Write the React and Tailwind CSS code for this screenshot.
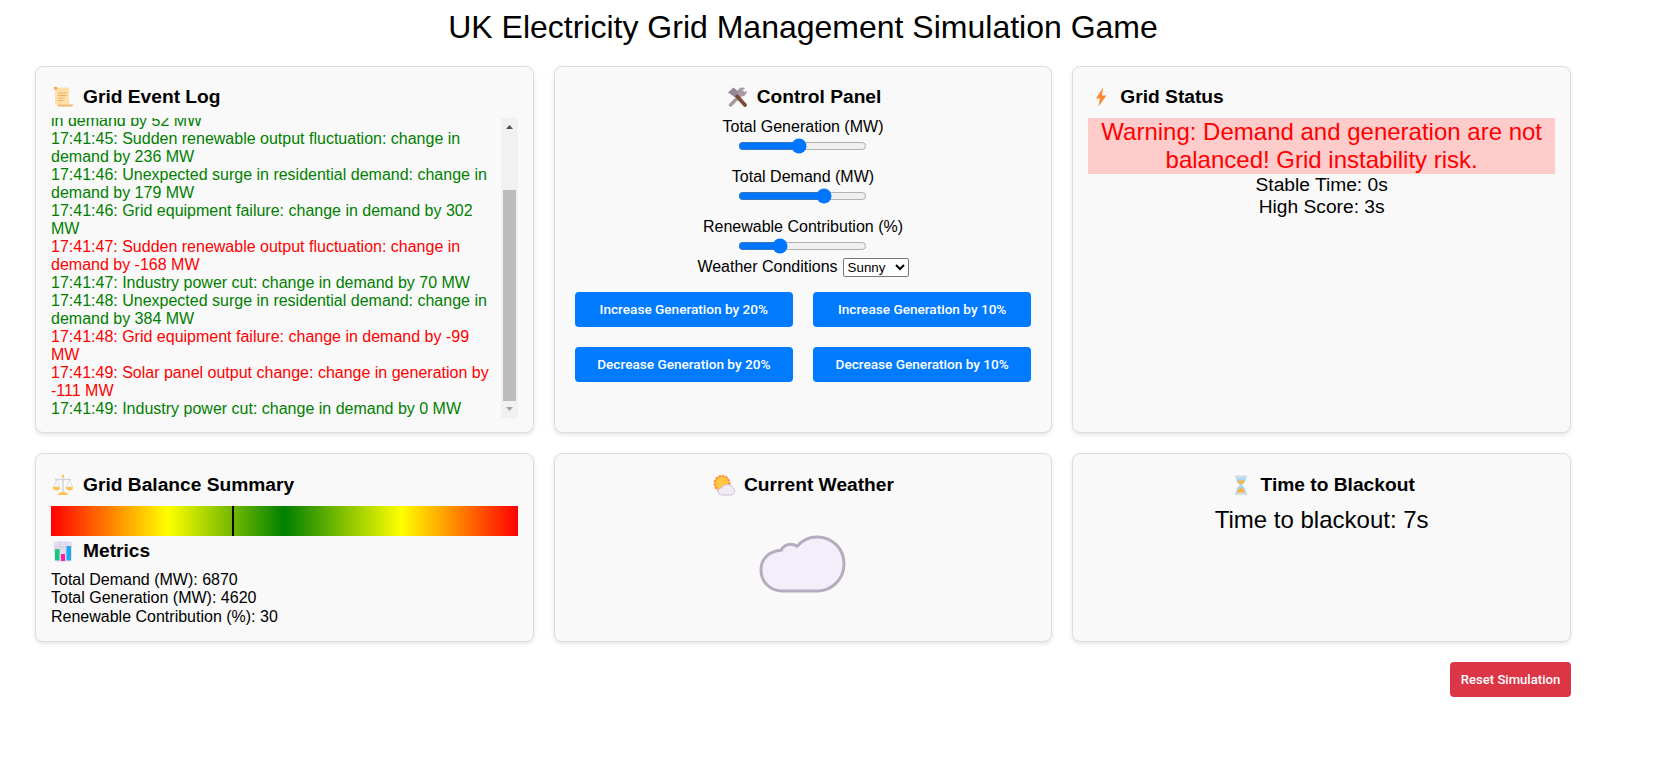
const LOG = [
  { text: '17:41:44: Sudden wind generation output fluctuation: change\nin demand by 52 MW', up: true },
  { text: '17:41:45: Sudden renewable output fluctuation: change in demand by 236 MW', up: true },
  { text: '17:41:46: Unexpected surge in residential demand: change in demand by 179 MW', up: true },
  { text: '17:41:46: Grid equipment failure: change in demand by 302 MW', up: true },
  { text: '17:41:47: Sudden renewable output fluctuation: change in demand by -168 MW', up: false },
  { text: '17:41:47: Industry power cut: change in demand by 70 MW', up: true },
  { text: '17:41:48: Unexpected surge in residential demand: change in demand by 384 MW', up: true },
  { text: '17:41:48: Grid equipment failure: change in demand by -99 MW', up: false },
  { text: '17:41:49: Solar panel output change: change in generation by -111 MW', up: false },
  { text: '17:41:49: Industry power cut: change in demand by 0 MW', up: true },
];

const SLIDERS = [
  { label: 'Total Generation (MW)', value: 4620, max: 10000 },
  { label: 'Total Demand (MW)', value: 6870, max: 10000 },
  { label: 'Renewable Contribution (%)', value: 30, max: 100 },
];

const ACTIONS = [
  'Increase Generation by 20%',
  'Increase Generation by 10%',
  'Decrease Generation by 20%',
  'Decrease Generation by 10%',
];

function Icon({ children }) {
  return (
    <svg viewBox="0 0 24 24" className="w-6 h-6 mr-2 shrink-0">
      {children}
    </svg>
  );
}

const ScrollIcon = () => (
  <Icon>
    <path d="M4 2.500h14v17H4z" fill="#ffdfa8" />
    <path d="M3 2h3v2.500H3z" fill="#f5a550" />
    <path d="M6 19.500h16.500l-1.500 2H7z" fill="#f7b469" />
    <path d="M7 8h9M7 10.500h9M7 13h7M7 15.500h5" stroke="#f2b26b" strokeWidth="1.200" />
  </Icon>
);

const ToolsIcon = () => (
  <Icon>
    <path d="M5.500 20L18 7.500" stroke="#a59aa5" strokeWidth="3.500" strokeLinecap="round" />
    <path d="M17 2.500a5 5 0 0 1 3 .8l-3 2.700 1.800 2 3-2.600a5 5 0 0 1-6.800 5.500l-2.500-2.500A5 5 0 0 1 17 2.500z" fill="#a59aa5" />
    <path d="M9.500 8.500L20 20" stroke="#7c4a3b" strokeWidth="3.800" strokeLinecap="round" />
    <path d="M3 7.500L8.500 2.500l5.500 4.500-4.500 5z" fill="#938996" />
  </Icon>
);

const BoltIcon = () => (
  <Icon>
    <path d="M15 2.500L8 13.500h4L10.500 21.500 18.500 10.500H14z" fill="#ff8a33" />
  </Icon>
);

const BalanceIcon = () => (
  <Icon>
    <path d="M12 3v16" stroke="#d8d2dc" strokeWidth="1.600" />
    <path d="M4 6.500h16" stroke="#d8d2dc" strokeWidth="1.400" />
    <path d="M5.500 7L2.500 14h6zM18.500 7l-3 7h6z" fill="none" stroke="#dcd6de" strokeWidth="0.800" />
    <path d="M2 14h7a3.500 3.500 0 0 1-7 0zM15 14h7a3.500 3.500 0 0 1-7 0z" fill="#ffc44d" />
    <path d="M7 22c0-2 2-3 5-3s5 1 5 3z" fill="#ffc44d" />
    <circle cx="12" cy="3" r="1.300" fill="#ffc44d" />
  </Icon>
);

const ChartIcon = () => (
  <Icon>
    <rect x="3" y="2.500" width="18" height="20" rx="2" fill="#e4dcef" />
    <path d="M3 8h18M9 2.500v20M15 2.500v20" stroke="#cfc5dd" strokeWidth="0.800" />
    <rect x="4" y="10" width="4.500" height="11.500" rx="1" fill="#12c97c" />
    <rect x="10" y="15" width="4" height="7" fill="#ff1f9c" />
    <rect x="15.500" y="7" width="4.500" height="14.500" rx="1" fill="#1ca9ee" />
  </Icon>
);

const SunCloudIcon = () => (
  <Icon>
    <circle cx="10" cy="10.500" r="7.500" fill="#ffc740" stroke="#ff8a33" strokeWidth="2" strokeDasharray="2.500 1" />
    <path d="M10 22c-2.500 0-4-1.500-4-3.500s1.500-3.500 3.500-3.700c1-2 3-3.300 5.500-3.300 3 0 5 1.500 6 3.500 1 .7 1.500 2 1.500 3.200 0 2.300-1.500 3.800-4 3.800z" fill="#f0ebf7" stroke="#c9c0d3" strokeWidth="1" />
  </Icon>
);

const HourglassIcon = () => (
  <Icon>
    <path d="M6 2.500h12v2.500H6zM6 19.500h12V22H6z" fill="#d5dce4" />
    <path d="M7 5h10c0 4-2.500 5.500-4 7 1.500 1.500 4 3 4 7.500H7c0-4.500 2.500-6 4-7.500C9.500 10.500 7 9 7 5z" fill="#a8daf7" />
    <path d="M8.500 7.500h7c-.5 2-2.500 3.500-3.500 4.500-1-1-3-2.500-3.500-4.500zM12 14c1.500 1.500 3.500 3 4 5.500H8c.5-2.500 2.500-4 4-5.500z" fill="#ffb23e" />
  </Icon>
);

function Heading({ icon, children, center }) {
  return (
    <h3 className={`flex items-center h-[30px] text-[19.2px] font-bold text-black ${center ? 'justify-center' : ''}`}>
      {icon}
      {children}
    </h3>
  );
}

function Card({ children, className = '' }) {
  return (
    <section className={`rounded-lg border border-[#dddddd] bg-[#f9f9f9] p-[15px] shadow-[0_2px_4px_rgba(0,0,0,0.1)] ${className}`}>
      {children}
    </section>
  );
}

export default function App() {
  return (
    <div className="w-[1571px] pl-[35px] font-['Liberation_Sans',Arial,sans-serif] text-base text-black">
      <h1 className="h-[66px] pt-[9px] text-center text-[32px] leading-[37px]">
        UK Electricity Grid Management Simulation Game
      </h1>

      <div className="grid grid-cols-3 grid-rows-[367px_189px] gap-5">
        <Card>
          <Heading icon={<ScrollIcon />}>Grid Event Log</Heading>
          <div className="mt-[6px] flex h-[300px]">
            <div className="flex flex-1 flex-col justify-end overflow-hidden text-[16px] leading-[18px]">
              {LOG.map((item, i) => (
                <div key={i} className={`shrink-0 whitespace-pre-line ${item.up ? 'text-[#008000]' : 'text-[#ff0000]'}`}>
                  {item.text}
                </div>
              ))}
            </div>
            <div className="flex w-[17px] shrink-0 flex-col items-center bg-[#f1f1f1]">
              <svg viewBox="0 0 17 17" className="w-[17px] h-[17px] shrink-0">
                <path d="M5 11h7L8.500 7z" fill="#505050" />
              </svg>
              <div className="mt-[55px] w-[13px] flex-1 bg-[#bcbcbc]" />
              <svg viewBox="0 0 17 17" className="w-[17px] h-[17px] shrink-0">
                <path d="M5 6h7l-3.500 4z" fill="#a3a3a3" />
              </svg>
            </div>
          </div>
        </Card>

        <Card className="text-center">
          <Heading icon={<ToolsIcon />} center>Control Panel</Heading>
          <div className="mt-[6px]">
            {SLIDERS.map((s, i) => (
              <div key={s.label} className={i === 2 ? 'h-[38px]' : 'h-[50px]'}>
                <label className="block leading-[18px]">{s.label}</label>
                <input
                  type="range"
                  min="0"
                  max={s.max}
                  defaultValue={s.value}
                  className="mt-[2px] mx-auto block w-[129px]"
                />
              </div>
            ))}
            <div className="flex h-[22px] items-center justify-center">
              <label>Weather Conditions</label>
              <select defaultValue="Sunny" className="ml-[5px] h-[19px] w-[66px] border border-[#767676] rounded-[2px] bg-white text-[13.330px]">
                <option>Sunny</option>
                <option>Cloudy</option>
                <option>Rainy</option>
              </select>
            </div>
            <div className="mt-[14px] grid grid-cols-2 gap-5 px-[5px]">
              {ACTIONS.map((a) => (
                <button key={a} type="button" className="h-[35px] rounded-[4px] bg-[#007bff] font-['Roboto',sans-serif] text-[13.6px] font-medium text-white">
                  {a}
                </button>
              ))}
            </div>
          </div>
        </Card>

        <Card className="text-center">
          <Heading icon={<BoltIcon />}>Grid Status</Heading>
          <div className="mt-[6px] bg-[#ffcccc] text-[24px] leading-[28px] text-[#ff0000]">
            Warning: Demand and generation are not balanced! Grid instability risk.
          </div>
          <div className="text-[19.2px] leading-[22px]">
            <div>Stable Time: 0s</div>
            <div>High Score: 3s</div>
          </div>
        </Card>

        <Card className="pt-[16px]">
          <Heading icon={<BalanceIcon />}>Grid Balance Summary</Heading>
          <div className="relative mt-[6px] h-[30px] bg-[linear-gradient(to_right,#ff0000,#ffff00,#008000,#ffff00,#ff0000)]">
            <div className="absolute left-[38.8%] top-0 h-full w-[2px] bg-black" />
          </div>
          <Heading icon={<ChartIcon />}>Metrics</Heading>
          <div className="mt-[5px] leading-[18.300px]">
            <div>Total Demand (MW): 6870</div>
            <div>Total Generation (MW): 4620</div>
            <div>Renewable Contribution (%): 30</div>
          </div>
        </Card>

        <Card className="pt-[16px]">
          <Heading icon={<SunCloudIcon />} center>Current Weather</Heading>
          <div className="mt-[35px] flex justify-center">
            <svg viewBox="0 0 87 58" className="w-[87px] h-[58px]">
              <path
                d="M24 56C11 56 2 47 2 35C2 24 10 16 22 15.300C24 11.500 28 9.300 32 9.300C34 9.300 36 10 38 11.300C43 5.500 50 2 58 2C73 2 85 13.500 85 29C85 44 73 56 58 56Z"
                fill="#f3eef9"
                stroke="#b5adbf"
                strokeWidth="3"
              />
            </svg>
          </div>
        </Card>

        <Card className="pt-[16px] text-center">
          <Heading icon={<HourglassIcon />} center>Time to Blackout</Heading>
          <div className="mt-[6px] text-[24px] leading-[28px]">Time to blackout: 7s</div>
        </Card>
      </div>

      <div className="mt-5 flex justify-end">
        <button type="button" className="h-[35px] w-[121px] rounded-[4px] bg-[#dc3545] font-['Roboto',sans-serif] text-[13.1px] font-medium text-white">
          Reset Simulation
        </button>
      </div>
    </div>
  );
}
